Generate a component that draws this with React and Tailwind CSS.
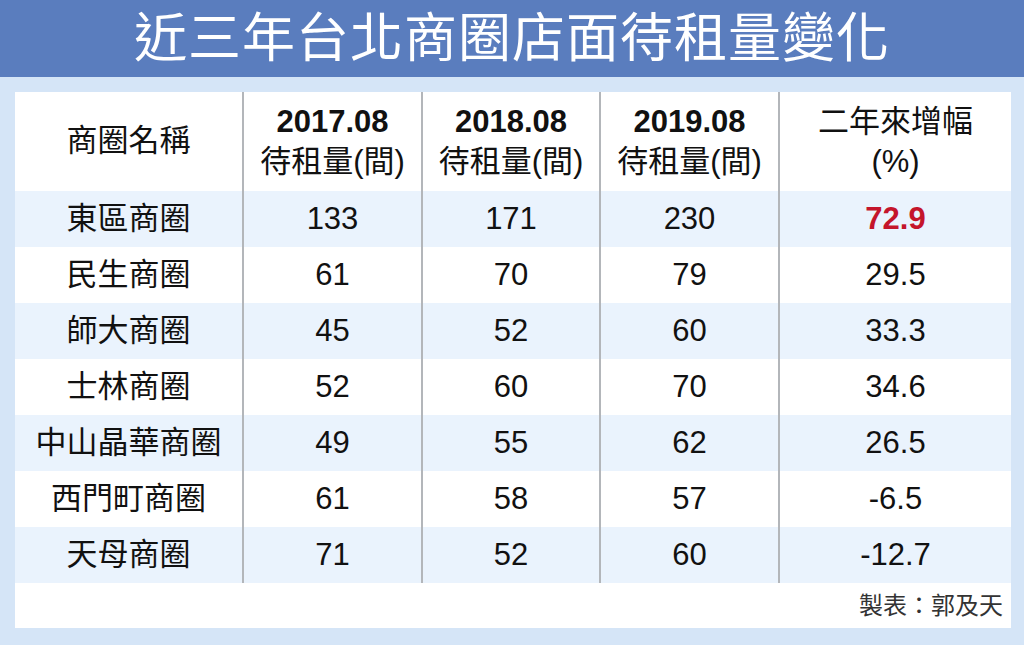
import React from 'react';

const font = { fontFamily: '"Liberation Sans", "Noto Sans CJK TC", sans-serif' };

const rows = [
  ['東區商圈', '133', '171', '230', '72.9'],
  ['民生商圈', '61', '70', '79', '29.5'],
  ['師大商圈', '45', '52', '60', '33.3'],
  ['士林商圈', '52', '60', '70', '34.6'],
  ['中山晶華商圈', '49', '55', '62', '26.5'],
  ['西門町商圈', '61', '58', '57', '-6.5'],
  ['天母商圈', '71', '52', '60', '-12.7'],
];

const cols = 'grid grid-cols-[227px_179px_178px_179px_1fr]';

const YearHead = ({ year }) => (
  <div className="flex flex-col items-center justify-center border-l-2 border-[#b3b6ba] leading-[40px]">
    <span className="font-bold">{year}</span>
    <span>待租量(間)</span>
  </div>
);

const App = () => {
  return (
    <div className="w-[1024px] h-[645px] bg-[#d5e5f7] flex flex-col text-[#111]" style={font}>
      {/* Title bar */}
      <div className="h-[77px] bg-[#5a7dbe] flex items-center justify-center">
        <h1 className="text-white text-[53px] tracking-[1px] leading-none">近三年台北商圈店面待租量變化</h1>
      </div>

      {/* Table panel */}
      <div className="mt-[15px] ml-[15px] mr-[13px] h-[536px] bg-white flex flex-col">
        <div className={`${cols} h-[99px] text-[31px]`}>
          <div className="flex items-center justify-center">商圈名稱</div>
          <YearHead year="2017.08" />
          <YearHead year="2018.08" />
          <YearHead year="2019.08" />
          <div className="flex flex-col items-center justify-center border-l-2 border-[#b3b6ba] leading-[40px]">
            <span>二年來增幅</span>
            <span>(%)</span>
          </div>
        </div>

        {rows.map((r, i) => (
          <div key={r[0]} className={`${cols} h-[56px] text-[31px] ${i % 2 === 0 ? 'bg-[#eaf3fd]' : 'bg-white'}`}>
            <div className="flex items-center justify-center">{r[0]}</div>
            <div className="flex items-center justify-center border-l-2 border-[#b3b6ba]">{r[1]}</div>
            <div className="flex items-center justify-center border-l-2 border-[#b3b6ba]">{r[2]}</div>
            <div className="flex items-center justify-center border-l-2 border-[#b3b6ba]">{r[3]}</div>
            <div className="flex items-center justify-center border-l-2 border-[#b3b6ba]">
              {i === 0 ? (
                <span className="font-bold text-[#c4152b]">{r[4]}</span>
              ) : (
                r[4]
              )}
            </div>
          </div>
        ))}

        <div className="flex-1 flex items-center justify-end pr-[8px] text-[24px] text-[#333]">
          製表：郭及天
        </div>
      </div>
    </div>
  );
};

export default App;
